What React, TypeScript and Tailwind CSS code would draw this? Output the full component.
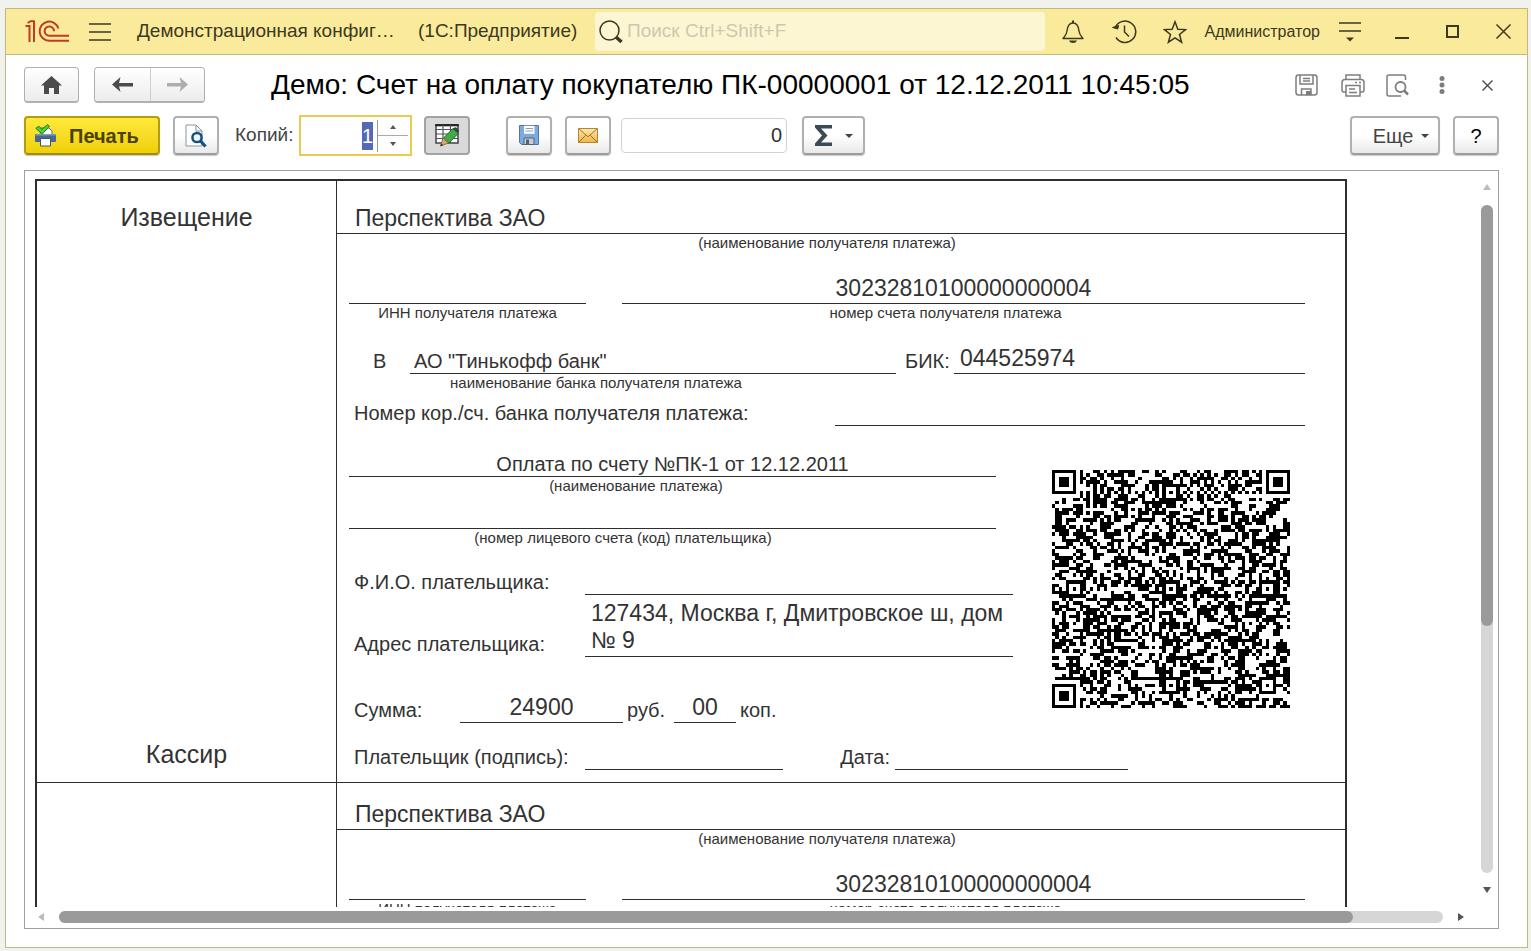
import React, { useEffect, useRef } from 'react';

const QR_SIZE = 69;
const ALIGN = [6, 34, 62];

// fixed modules of the code: finders, separators, timing, alignment; null means a data module
const fixedModule = (x: number, y: number): boolean | null => {
    const last = QR_SIZE - 7;
    for (const [fx, fy] of [[0, 0], [last, 0], [0, last]]) {
        const dx = Math.abs(x - fx - 3);
        const dy = Math.abs(y - fy - 3);
        const d = Math.max(dx, dy);
        if (d <= 4) return d !== 4 && d !== 2;
    }
    for (const ay of ALIGN) {
        for (const ax of ALIGN) {
            if ((ax === 6 && ay !== 34) || (ay === 6 && ax !== 34)) continue;
            const d = Math.max(Math.abs(x - ax), Math.abs(y - ay));
            if (d <= 2) return d !== 1;
        }
    }
    if (x === 6 || y === 6) return (x + y) % 2 === 0;
    return null;
};

const buildQr = () => {
    let seed = 20111212;
    let d = '';
    for (let y = 0; y < QR_SIZE; y++) {
        for (let x = 0; x < QR_SIZE; x++) {
            seed = (Math.imul(seed, 1664525) + 1013904223) >>> 0;
            const fixed = fixedModule(x, y);
            const dark = fixed === null ? (seed >>> 16) % 100 < 50 : fixed;
            if (dark) d += `M${x} ${y}h1v1h-1z`;
        }
    }
    return d;
};

const qrPath = buildQr();

const btn = 'flex items-center justify-center rounded-[4px] border-2 border-[#b0b0b0] border-b-[#9c9c9c] bg-linear-to-b from-white via-white to-[#e9e9e9] shadow-[0_1px_1px_#c8c8c8]';

const Logo = () => (
    <svg width="44" height="23" viewBox="0 0 44 23" fill="none" stroke="#c23a22" strokeWidth="2">
        <path d="M.5 6h4V22M2.600 3 5.600 1.200h3.400V22" />
        <path d="M33.500 8.600A9.600 9.600 0 1 0 24.300 20.800H44" />
        <path d="M29 11.200A4.700 4.700 0 1 0 24.300 15.800H44" />
    </svg>
);

const PrinterIcon = () => (
    <svg width="22" height="23" viewBox="0 0 22 23">
        <path d="M6 4h8l3 3v4H5z" fill="#fff" stroke="#5a6b7c" />
        <path d="M1 10h19q1 0 1 1v6q0 1-1 1H1q-1 0-1-1v-6q0-1 1-1z" fill="#4a678c" />
        <path d="M1 10h20v1.500H0z" fill="#7d9ab8" />
        <path d="M5.500 14.500h10v7.500h-10z" fill="#fff" stroke="#3e566f" />
        <path d="m.8 4.300 3-2L7 5.200 12.500.600l2 1.600L7.300 10z" fill="#4ed22c" stroke="#1d7d12" />
    </svg>
);

const PreviewIcon = () => (
    <svg width="22" height="24" viewBox="0 0 22 24" fill="none">
        <path d="M1 1h10l6 6v15H1z" fill="#fff" stroke="#8494a5" />
        <path d="M11 1v6h6" stroke="#8494a5" />
        <circle cx="12" cy="13.500" r="4.600" fill="#eef8ff" stroke="#164f80" strokeWidth="2.500" />
        <path d="m15.500 17 5 5.500" stroke="#164f80" strokeWidth="3.200" />
    </svg>
);

const TableEditIcon = () => (
    <svg width="25" height="23" viewBox="0 0 25 23">
        <path d="M1 1h22v18H1z" fill="#fff" stroke="#444" strokeWidth="1.500" />
        <path d="M.3 1.200h23.400" stroke="#222" strokeWidth="2.200" />
        <path d="M1 5.500h22M1 10h22M1 14.500h22M8 1v18M15.500 1v18" stroke="#555" strokeWidth="1.200" fill="none" />
        <path d="m8 14.500 10-10 5.500 4.500-9.500 10z" fill="#42ab49" stroke="#1e6a2b" />
        <path d="m17.500 4.800 2.500-1.500q3.500.500 4 4L22.500 9.300z" fill="#2b4a48" />
        <path d="m8 14-2.500 8 8-3z" fill="#d8a878" stroke="#8a5a34" strokeWidth=".8" />
        <path d="m6.200 19.500-.800 2.800 2.800-1z" fill="#333" />
    </svg>
);

const DiskIcon = () => (
    <svg width="20" height="21" viewBox="0 0 20 21">
        <path d="M.5.5h19v19h-17l-2-2z" fill="#7eabdd" stroke="#4a78ac" />
        <path d="M5 .8h10.500v8H5z" fill="#fff" />
        <path d="M6.500 3.500h7.500M6.500 6h7.500" stroke="#8a9db2" />
        <path d="M5 13h10v6.500H5z" fill="#c7ced6" stroke="#4f6274" />
        <path d="M7 14.500h3V19H7z" fill="#54616e" />
    </svg>
);

const MailIcon = () => (
    <svg width="20" height="15" viewBox="0 0 20 15">
        <defs>
            <linearGradient id="mail" x1="0" y1="0" x2="0" y2="1">
                <stop offset="0" stopColor="#fde9b0" />
                <stop offset="1" stopColor="#f0b445" />
            </linearGradient>
        </defs>
        <path d="M.5.5h19v14H.5z" fill="url(#mail)" stroke="#b98534" />
        <path d="m.8.800 9.200 8 9.200-8M.8 14.200l7-7M19.200 14.200l-7-7" fill="none" stroke="#a87022" />
    </svg>
);

const Caret = () => (
    <svg width="8" height="4" viewBox="0 0 8 4"><path d="M0 0h8L4 4z" fill="#444" /></svg>
);

const Caption = ({ className = '', children }: { className?: string; children?: React.ReactNode }) => (
    <div className={`h-[18px] text-center text-[15px] leading-[18px] ${className}`}>{children}</div>
);

// underlined field of the receipt
const Field = ({ className = '', children }: { className?: string; children?: React.ReactNode }) => (
    <div className={`border-b border-[#2e2e2e] ${className}`}>{children}</div>
);

const Recipient = ({ className }: { className: string }) => (
    <>
        <Field className={`flex items-end pl-[18px] text-[23px] leading-[30px] ${className}`}>Перспектива ЗАО</Field>
        <div className="pr-10 pl-3">
            <Caption>(наименование получателя платежа)</Caption>
            <div className="flex h-[52px] items-end gap-9">
                <Field className="w-[237px]" />
                <Field className="flex-1 text-center text-[23px] leading-[30px]">30232810100000000004</Field>
            </div>
            <div className="flex">
                <Caption className="w-[237px]">ИНН получателя платежа</Caption>
                <Caption className="flex-1">номер счета получателя платежа</Caption>
            </div>
        </div>
    </>
);

const PaymentDetails = () => (
    <div className="pr-10 pl-3">
        <div className="flex h-[52px] items-end">
            <span className="w-[61px] pb-px pl-6">В</span>
            <Field className="w-[486px] pl-1">АО "Тинькофф банк"</Field>
            <span className="w-[58px] pb-px pl-[9px]">БИК:</span>
            <Field className="flex-1 pl-1.5 text-[23px] leading-[30px]">044525974</Field>
        </div>
        <Caption className="ml-[61px] w-[372px]">наименование банка получателя платежа</Caption>
        <div className="flex h-[34px] items-end">
            <span className="w-[486px] pb-px pl-[5px]">Номер кор./сч. банка получателя платежа:</span>
            <Field className="flex-1" />
        </div>
        <div className="flex">
            <div className="w-[664px]">
                <div className="flex h-[51px] w-[647px] flex-col justify-end">
                    <Field className="text-center">Оплата по счету №ПК-1 от 12.12.2011</Field>
                </div>
                <Caption className="w-[574px]">(наименование платежа)</Caption>
                <Field className="h-[34px] w-[647px]" />
                <Caption className="w-[548px]">(номер лицевого счета (код) плательщика)</Caption>
                <div className="flex h-12 items-end">
                    <span className="w-[236px] pb-px pl-[5px]">Ф.И.О. плательщика:</span>
                    <Field className="flex-1" />
                </div>
                <div className="flex h-[62px] items-end">
                    <span className="w-[236px] pb-px pl-[5px]">Адрес плательщика:</span>
                    <Field className="flex-1 pb-0.5 pl-1.5 text-[23px] leading-[27px]">
                        127434, Москва г, Дмитровское ш, дом № 9
                    </Field>
                </div>
                <div className="flex h-[66px] items-end">
                    <span className="w-[111px] pb-px pl-[5px]">Сумма:</span>
                    <Field className="w-[163px] text-center text-[23px] leading-[30px]">24900</Field>
                    <span className="w-[51px] pb-px pl-1">руб.</span>
                    <Field className="w-[62px] text-center text-[23px] leading-[30px]">00</Field>
                    <span className="pb-px pl-1">коп.</span>
                </div>
            </div>
            <svg className="mt-11 ml-[39px] size-[238px]" viewBox={`0 0 ${QR_SIZE} ${QR_SIZE}`} shapeRendering="crispEdges">
                <path d={qrPath} fill="#000" />
            </svg>
        </div>
        <div className="mb-3 flex h-[47px] items-end">
            <span className="w-[236px] pb-px pl-[5px]">Плательщик (подпись):</span>
            <Field className="w-[198px]" />
            <span className="w-28 pr-[5px] pb-px text-right">Дата:</span>
            <Field className="w-[233px]" />
        </div>
    </div>
);

const TitleBar = () => (
    <header className="flex h-[46px] shrink-0 items-center border-b border-[#c3bb7c] bg-[#faeb9c] pr-4 pl-[19px] text-[#3d3820]">
        <Logo />
        <button aria-label="Меню" className="ml-5">
            <svg width="22" height="18" viewBox="0 0 22 18" stroke="currentColor" strokeWidth="1.500"><path d="M0 1h22M0 9h22M0 17h22" /></svg>
        </button>
        <span className="ml-[26px] w-[281px] text-[19px]">Демонстрационная конфиг…</span>
        <span className="w-[163px] text-[19px]">(1С:Предприятие)</span>
        <label className="ml-3.5 flex h-[39px] flex-1 items-center rounded bg-[#fdf6d3] pl-1">
            <svg width="24" height="24" viewBox="0 0 24 24" fill="none" stroke="currentColor">
                <circle cx="10.500" cy="10.500" r="9.500" strokeWidth="1.500" />
                <path d="m17 17 5.500 5" strokeWidth="3.500" />
            </svg>
            <input aria-label="Поиск" placeholder="Поиск Ctrl+Shift+F" className="ml-1 min-w-0 flex-1 bg-transparent text-[19px] outline-none placeholder:text-[#cdc8ae]" />
        </label>
        <button aria-label="Уведомления" className="ml-[17px]">
            <svg width="22" height="23" viewBox="0 0 22 23" fill="none" stroke="currentColor" strokeWidth="1.400">
                <path d="M1 18.500h20c-2-2.500-3.500-3.500-4-7.500-.5-5-2-8-6-8s-5.500 3-6 8c-.5 4-2 5-4 7.500z" strokeLinejoin="round" />
                <path d="M11 3V.5" strokeWidth="2" />
                <path d="M7 20.500h8q-1 2.500-4 2.500t-4-2.500z" fill="currentColor" stroke="none" />
            </svg>
        </button>
        <button aria-label="История" className="ml-7">
            <svg width="25" height="24" viewBox="0 0 25 24" fill="none" stroke="currentColor" strokeWidth="1.500">
                <path d="M3 8A10.700 10.700 0 1 1 4 17.500" />
                <path d="M.5 7.500 5.800 9l.8-3.500z" fill="currentColor" strokeWidth="1" />
                <path d="M12.500 5.500v6.500l4.500 4.500" />
            </svg>
        </button>
        <button aria-label="Избранное" className="ml-[26px]">
            <svg width="24" height="24" viewBox="0 0 24 24" fill="none" stroke="currentColor" strokeWidth="1.500">
                <path d="m12 1.800 2.800 7.400 7.800.4-6.100 4.900 2.100 7.700-6.600-4.400-6.600 4.400 2.100-7.700L1.400 9.600l7.800-.4z" />
            </svg>
        </button>
        <span className="ml-[18px] text-base">Администратор</span>
        <button aria-label="Настройки" className="ml-[19px]">
            <svg width="22" height="20" viewBox="0 0 22 20" stroke="currentColor" strokeWidth="1.500">
                <path d="M0 1h22M0 9h22" />
                <path d="M7 15.500h8l-4 4z" fill="currentColor" stroke="none" />
            </svg>
        </button>
        <button aria-label="Свернуть" className="ml-[34px]">
            <svg width="14" height="14" viewBox="0 0 14 14"><path d="M0 12h14v2H0z" fill="currentColor" /></svg>
        </button>
        <button aria-label="Развернуть" className="ml-[37px]">
            <svg width="13" height="13" viewBox="0 0 13 13" fill="none" stroke="currentColor" strokeWidth="2"><path d="M1 1h11v11H1z" /></svg>
        </button>
        <button aria-label="Закрыть" className="ml-[37px]">
            <svg width="15" height="15" viewBox="0 0 15 15" stroke="currentColor" strokeWidth="1.500"><path d="m.5.5 14 14m0-14-14 14" /></svg>
        </button>
    </header>
);

const FormHeader = () => (
    <div className="flex h-9 items-center">
        <button aria-label="Домой" className="flex h-9 w-[55px] items-center justify-center rounded border border-b-2 border-[#b0b0b0] bg-linear-to-b from-white to-[#ececec]">
            <svg width="21" height="18" viewBox="0 0 21 18"><path d="M10.500 0 21 9.500h-3V18h-5v-6H8v6H3V9.500H0z" fill="#4b4b4b" /></svg>
        </button>
        <div className="ml-[15px] flex rounded border border-b-2 border-[#b0b0b0]">
            <button aria-label="Назад" className="flex h-[33px] w-[55px] items-center justify-center rounded-l bg-linear-to-b from-white to-[#ececec] text-[#4b4b4b]">
                <svg width="21" height="15" viewBox="0 0 21 15"><path d="M0 7.500 8.500 0 7 6h14v3.500H7L8.500 15z" fill="currentColor" /></svg>
            </button>
            <button aria-label="Вперед" className="flex h-[33px] w-[54px] items-center justify-center rounded-r border-l border-[#cfcfcf] bg-linear-to-b from-white to-[#ececec] text-[#adadad]">
                <svg width="21" height="15" viewBox="0 0 21 15"><path d="M21 7.500 12.500 0 14 6H0v3.500h14L12.500 15z" fill="currentColor" /></svg>
            </button>
        </div>
        <h1 className="ml-[66px] flex-1 truncate text-[28px] leading-9 text-black">Демо: Счет на оплату покупателю ПК-00000001 от 12.12.2011 10:45:05</h1>
        <div className="flex items-center text-[#7d7d7d]">
            <button aria-label="Сохранить">
                <svg width="23" height="22" viewBox="0 0 23 22" fill="none" stroke="currentColor" strokeWidth="1.500">
                    <rect x="1" y="1" width="21" height="20" rx="2.500" />
                    <path d="M5 1v9h13V1M8 4.500h7M8 7h7M6.500 21v-6H16v6" />
                    <path d="M11 17h5v4h-5z" fill="currentColor" stroke="none" />
                </svg>
            </button>
            <button aria-label="Печать" className="ml-[23px]">
                <svg width="24" height="23" viewBox="0 0 24 23" fill="none" stroke="currentColor" strokeWidth="1.500">
                    <path d="M5 5.500V1h14v4.500M5 18H3q-2 0-2-2V8.500q0-3 3-3h16q3 0 3 3V16q0 2-2 2h-2" />
                    <path d="M5 11.500h14V22H5zM8 15h6M8 18.500h8" />
                    <path d="M14 8.500h2M18 8.500h2" />
                </svg>
            </button>
            <button aria-label="Просмотр" className="ml-[21px]">
                <svg width="23" height="23" viewBox="0 0 23 23" fill="none" stroke="currentColor" strokeWidth="1.500">
                    <path d="M19.500 6V3q0-2-2-2H3Q1 1 1 3v17q0 2 2 2h12" />
                    <circle cx="14.500" cy="13" r="5" strokeWidth="1.800" />
                    <path d="m18 16.500 4 4" strokeWidth="2.500" />
                </svg>
            </button>
            <button aria-label="Действия" className="ml-[30px]">
                <svg width="6" height="18" viewBox="0 0 6 18" fill="currentColor"><circle cx="3" cy="2.500" r="2.500" /><circle cx="3" cy="9" r="2.500" /><circle cx="3" cy="15.500" r="2.500" /></svg>
            </button>
            <button aria-label="Закрыть форму" className="mr-[6px] ml-[37px] text-[#444]">
                <svg width="11" height="11" viewBox="0 0 11 11" stroke="currentColor" strokeWidth="1.300"><path d="m.5.5 10 10m0-10-10 10" /></svg>
            </button>
        </div>
    </div>
);

const Toolbar = () => {
    const copiesRef = useRef<HTMLInputElement>(null);

    useEffect(() => {
        copiesRef.current?.focus();
        copiesRef.current?.select();
    }, []);

    return (
        <div className="mt-3 flex h-[41px] items-center text-xl text-[#444]">
            <button className="flex h-[39px] w-[136px] items-center rounded-[4px] border-2 border-[#b39d0c] border-b-[#a08c10] bg-linear-to-b from-[#ffe93a] to-[#f0d000] pl-[9px] font-bold text-[#4a4200] shadow-[0_1px_1px_#c8c8c8]">
                <PrinterIcon />
                <span className="ml-3">Печать</span>
            </button>
            <button aria-label="Предварительный просмотр" className={`${btn} ml-[13px] h-[39px] w-[46px]`}><PreviewIcon /></button>
            <label htmlFor="copies" className="ml-4 w-16 text-[19px]">Копий:</label>
            <div className="flex h-[41px] w-[113px] items-center border-2 border-[#e8cb4f] bg-white">
                <input id="copies" ref={copiesRef} defaultValue="1" className="min-w-0 flex-1 pr-1 text-right outline-none selection:bg-[#5468b4] selection:text-white" />
                <div className="mr-0.5 flex w-[31px] flex-col border-l border-[#999]">
                    <button aria-label="Больше" className="flex h-4 items-center justify-center border-b border-[#aaa]">
                        <svg width="6" height="4" viewBox="0 0 6 4"><path d="M0 4h6L3 0z" fill="#555" /></svg>
                    </button>
                    <button aria-label="Меньше" className="flex h-4 items-center justify-center">
                        <svg width="6" height="4" viewBox="0 0 6 4"><path d="M0 0h6L3 4z" fill="#555" /></svg>
                    </button>
                </div>
            </div>
            <button aria-label="Редактирование" className="ml-3 flex h-[39px] w-[46px] items-center justify-center rounded-[4px] border-2 border-[#a3a3a3] bg-[#d9d9d9]"><TableEditIcon /></button>
            <button aria-label="Сохранить на диск" className={`${btn} ml-9 h-[39px] w-[46px]`}><DiskIcon /></button>
            <button aria-label="Отправить по почте" className={`${btn} ml-[13px] h-[39px] w-[46px]`}><MailIcon /></button>
            <input aria-label="Сумма ячеек" defaultValue="0" className="ml-2.5 h-[35px] w-[166px] rounded border border-[#d2d2d2] pr-1 text-right text-[#333] outline-none" />
            <button aria-label="Сумма" className={`${btn} ml-[15px] h-[39px] w-[63px] gap-3`}>
                <svg width="18" height="21" viewBox="0 0 18 21"><path d="M0 0h17v3.500H6l6.500 7-6.500 7h11V21H0v-2.500l7-8L0 2.500z" fill="#3b4a57" /></svg>
                <Caret />
            </button>
            <div className="flex-1" />
            <button className={`${btn} h-[39px] w-[90px] gap-2 pl-3`}>Еще<Caret /></button>
            <button className={`${btn} ml-[13px] h-[39px] w-[46px] text-black`}>?</button>
        </div>
    );
};

const App: React.FC = () => {
    return (
        <div className="flex h-screen flex-col bg-[#f1f1ee] pt-2 pr-[3px] pb-[3px] pl-[5px] font-['Liberation_Sans',Arial,sans-serif]">
            <div className="flex min-h-0 flex-1 flex-col border border-[#bdb97f] bg-white">
                <TitleBar />
                <main className="flex min-h-0 flex-1 flex-col pt-3 pr-7 pb-[18px] pl-[18px]">
                    <FormHeader />
                    <Toolbar />
                    <div className="mt-[14px] flex min-h-0 flex-1 flex-col border border-[#a0a0a0]">
                        <div className="flex min-h-0 flex-1">
                            <div className="min-w-0 flex-1 overflow-hidden pt-2 pl-2.5">
                                <div className="w-[1312px] border-2 border-[#2e2e2e] text-xl leading-6 text-[#333]">
                                    <section className="flex border-b border-[#2e2e2e]">
                                        <div className="flex w-[300px] shrink-0 flex-col justify-between border-r border-[#2e2e2e] pt-5 pb-3 text-center text-[25px] leading-8">
                                            <span>Извещение</span>
                                            <span>Кассир</span>
                                        </div>
                                        <div className="min-w-0 flex-1">
                                            <Recipient className="h-[53px]" />
                                            <PaymentDetails />
                                        </div>
                                    </section>
                                    <section className="flex">
                                        <div className="w-[300px] shrink-0 border-r border-[#2e2e2e]" />
                                        <div className="min-w-0 flex-1">
                                            <Recipient className="h-[47px]" />
                                        </div>
                                    </section>
                                </div>
                            </div>
                            <div className="flex w-[22px] shrink-0 flex-col items-center">
                                <svg className="mt-[13px]" width="8" height="6" viewBox="0 0 8 6"><path d="M0 6h8L4 0z" fill="#bbb" /></svg>
                                <div className="mt-[15px] w-3 flex-1 rounded-full bg-[#d6d6d6]">
                                    <div className="h-[63%] rounded-full bg-[#9a9a9a]" />
                                </div>
                                <svg className="my-[14px]" width="8" height="6" viewBox="0 0 8 6"><path d="M0 0h8L4 6z" fill="#555" /></svg>
                            </div>
                        </div>
                        <div className="flex h-[21px] shrink-0 items-center pr-[34px] pb-0.5 pl-[13px]">
                            <svg width="6" height="8" viewBox="0 0 6 8"><path d="M6 0v8L0 4z" fill="#bbb" /></svg>
                            <div className="mx-[15px] h-3 flex-1 rounded-full bg-[#d6d6d6]">
                                <div className="h-3 w-[93.5%] rounded-full bg-[#9a9a9a]" />
                            </div>
                            <svg width="6" height="8" viewBox="0 0 6 8"><path d="M0 0v8l6-4z" fill="#555" /></svg>
                        </div>
                    </div>
                </main>
            </div>
        </div>
    );
};

export default App;
